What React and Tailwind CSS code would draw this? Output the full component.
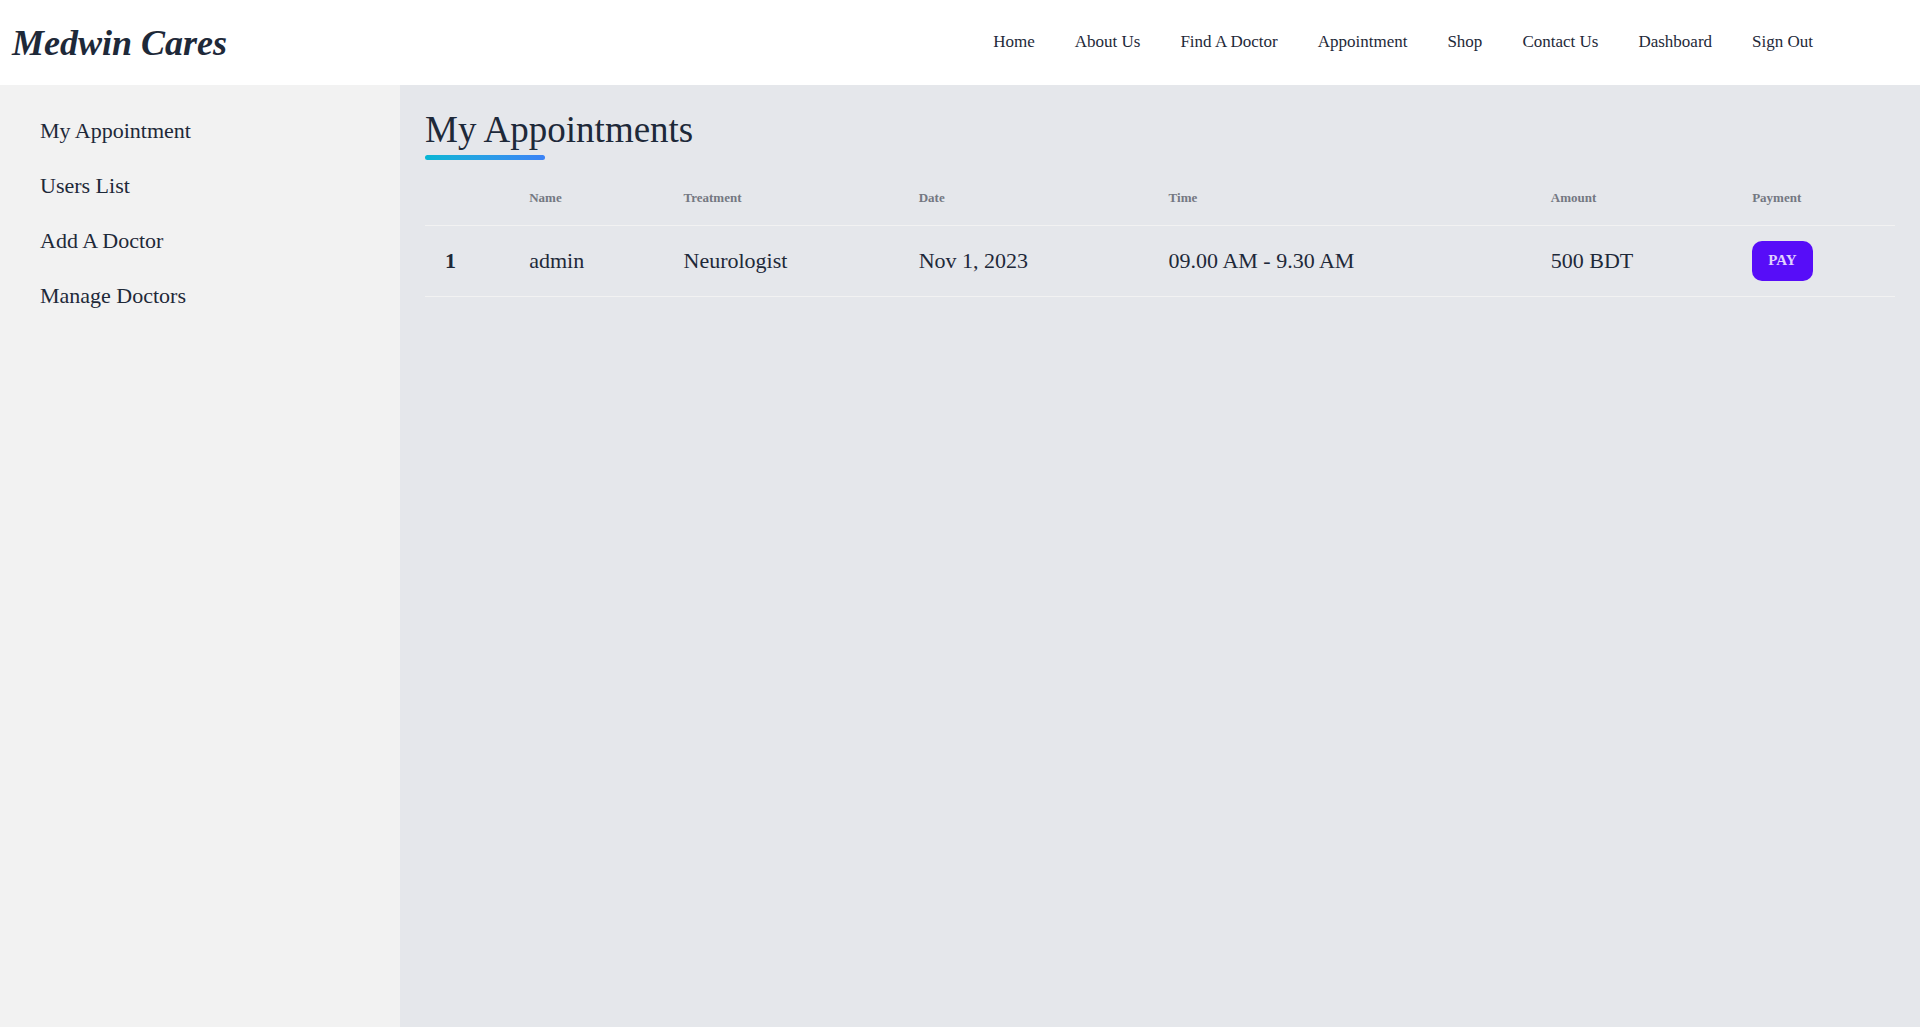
const navLinks = [
  "Home",
  "About Us",
  "Find A Doctor",
  "Appointment",
  "Shop",
  "Contact Us",
  "Dashboard",
  "Sign Out",
];

const sideLinks = ["My Appointment", "Users List", "Add A Doctor", "Manage Doctors"];

const appointments = [
  {
    name: "admin",
    treatment: "Neurologist",
    date: "Nov 1, 2023",
    time: "09.00 AM - 9.30 AM",
    amount: "500 BDT",
  },
];

function Header() {
  return (
    <header className="flex h-[85px] items-center justify-between bg-white pr-[107px] pl-3">
      <a
        href="#home"
        className="text-[36px] leading-10 font-bold whitespace-nowrap italic"
      >
        Medwin Cares
      </a>
      <nav className="flex gap-10 pb-0.5 text-[17px] leading-6 whitespace-nowrap">
        {navLinks.map((label) => (
          <a key={label} href="#nav">
            {label}
          </a>
        ))}
      </nav>
    </header>
  );
}

function Sidebar() {
  return (
    <aside className="w-[400px] shrink-0 bg-[#f2f2f2] px-10 py-[18px]">
      <ul className="text-[22px] leading-[55px]">
        {sideLinks.map((label) => (
          <li key={label}>
            <a href="#side">{label}</a>
          </li>
        ))}
      </ul>
    </aside>
  );
}

function AppointmentsTable() {
  return (
    <table className="w-full table-fixed text-left text-[22px]">
      <colgroup>
        <col className="w-[6%]" />
        <col className="w-[10.5%]" />
        <col className="w-[16%]" />
        <col className="w-[17%]" />
        <col className="w-[26%]" />
        <col className="w-[13.7%]" />
        <col />
      </colgroup>
      <thead>
        <tr className="h-[54px] border-b border-[#f2f2f2] text-[13px] text-[#747882]">
          <td></td>
          {["Name", "Treatment", "Date", "Time", "Amount", "Payment"].map((title) => (
            <th key={title} scope="col" className="px-4 font-bold">
              {title}
            </th>
          ))}
        </tr>
      </thead>
      <tbody>
        {appointments.map((item, index) => (
          <tr key={item.name} className="h-[71px] border-b border-[#f2f2f2]">
            <th scope="row" className="px-5 font-bold">
              {index + 1}
            </th>
            <td className="px-4">{item.name}</td>
            <td className="px-4">{item.treatment}</td>
            <td className="px-4">{item.date}</td>
            <td className="px-4">{item.time}</td>
            <td className="px-4">{item.amount}</td>
            <td className="px-4">
              <button
                type="button"
                className="block h-10 rounded-[10px] bg-[#570df8] px-4 text-[15px] font-bold text-[#e0d2fe]"
              >
                PAY
              </button>
            </td>
          </tr>
        ))}
      </tbody>
    </table>
  );
}

export default function App() {
  return (
    <div className="flex min-h-screen flex-col bg-white font-['Liberation_Serif',serif] text-gray-800">
      <Header />
      <div className="flex grow">
        <Sidebar />
        <main className="grow bg-gray-200 px-[25px] pt-5">
          <h1 className="text-[37px] leading-[50px]">My Appointments</h1>
          <div className="mb-[11px] h-[5px] w-[120px] rounded-full bg-linear-to-r from-[#06b6d4] to-[#3b82f6]" />
          <AppointmentsTable />
        </main>
      </div>
    </div>
  );
}
